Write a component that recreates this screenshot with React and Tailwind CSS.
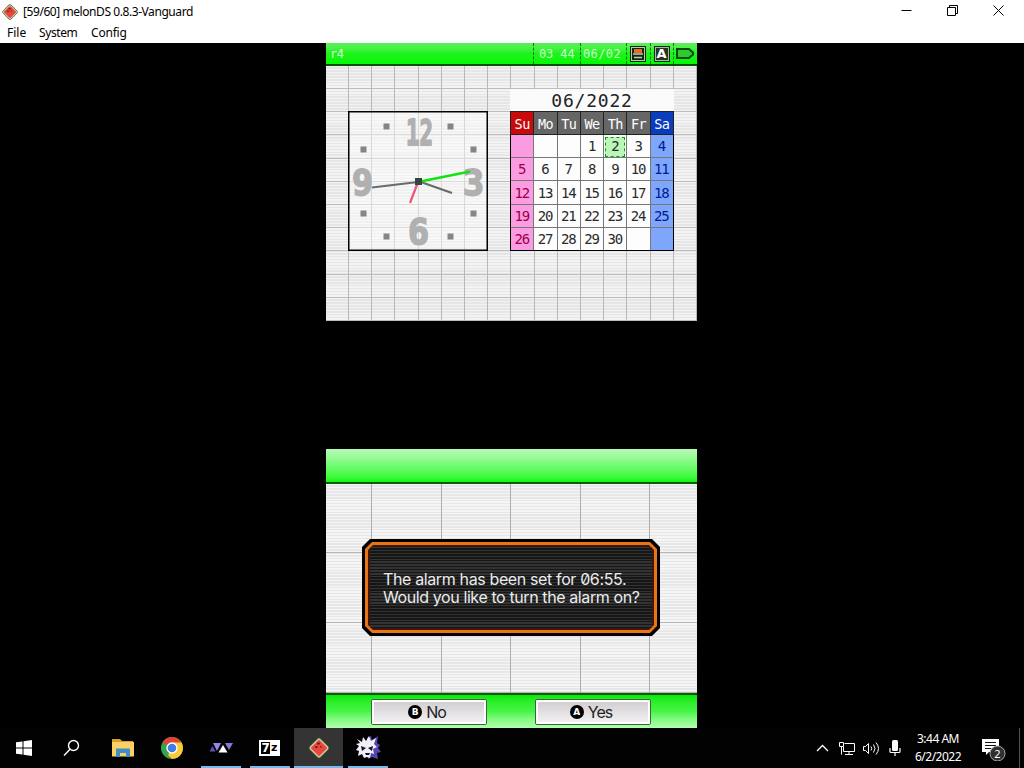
import React from "react";

const DAYS = ["Su", "Mo", "Tu", "We", "Th", "Fr", "Sa"];
const FIRST_WEEKDAY = 3;
const TODAY = 2;

const CELLS = Array.from({ length: 35 }, (_, i) => {
  const day = i - FIRST_WEEKDAY + 1;
  return day >= 1 && day <= 30 ? day : null;
});

function MelonIcon({ size }) {
  return (
    <svg width={size} height={size} viewBox="0 0 24 24">
      <rect x="4" y="4" width="16" height="16" rx="2.5" transform="rotate(45 12 12)" fill="#3f6b43" />
      <rect x="4.8" y="4.8" width="14.4" height="14.4" rx="2" transform="rotate(45 12 12)" fill="#e3cfa0" />
      <rect x="6" y="6" width="12" height="12" rx="1" transform="rotate(45 12 12)" fill="#e5483f" />
      <path d="M10 6.500h3v2h-3zM8 10h2.500v2H8zM13 10h1.500v1.500H13z" fill="#7d2020" />
    </svg>
  );
}

function TitleBar() {
  return (
    <div className="flex h-[24px] items-center bg-white text-black">
      <div className="ml-[1px] flex w-[22px]">
        <MelonIcon size={18} />
      </div>
      <span className="text-[12px] tracking-[-0.43px]">[59/60] melonDS 0.8.3-Vanguard</span>
      <div className="mr-[20px] ml-auto flex items-center gap-[35px] pb-[3px]">
        <svg width="11" height="11" viewBox="0 0 11 11" stroke="#000" fill="none">
          <path d="M0.500 5.500h10" />
        </svg>
        <svg width="11" height="11" viewBox="0 0 11 11" stroke="#000" fill="none">
          <path d="M0.500 2.500h8v8h-8zM2.500 2.500v-2h8v8h-2" />
        </svg>
        <svg width="11" height="11" viewBox="0 0 11 11" stroke="#000" fill="none">
          <path d="M0.500 0.500l10 10M10.500 0.500l-10 10" />
        </svg>
      </div>
    </div>
  );
}

function MenuBar() {
  return (
    <div className="flex h-[19px] items-center bg-white pb-[2px] pl-[7px] text-[12px] leading-[17px] text-black">
      <span className="w-[32px]">File</span>
      <span className="w-[52px] tracking-[-0.4px]">System</span>
      <span className="tracking-[-0.2px]">Config</span>
    </div>
  );
}

function StatusBar() {
  return (
    <div className="flex h-[23px] border-b-2 border-[#064d06] bg-linear-to-b from-[#5cf05c] via-[#1df21d] to-[#00fa00] font-['DejaVu_Sans_Mono',monospace] text-[12px] leading-[22px] text-[#c8ffc8]">
      <span className="w-[207px] pl-[4px] tracking-[-0.5px]">r4</span>
      <span className="w-[47px] border-l border-dashed border-[#087808] pl-[5px] tracking-[-0.1px] whitespace-pre">03 44</span>
      <span className="w-[46px] border-l border-dashed border-[#087808] pl-[2px] tracking-[0.4px]">06/02</span>
      <span className="flex w-[24px] items-center justify-center border-l border-dashed border-[#087808] pr-[1px]">
        <svg width="16" height="16" viewBox="0 0 16 16">
          <rect width="16" height="16" fill="#0b2b0b" />
          <rect x="1.500" y="1.500" width="13" height="13" fill="none" stroke="#b9c8b4" />
          <rect x="4" y="3" width="8" height="4" fill="#f0672b" />
          <path d="M3 8h10M4 11.500h8" stroke="#c9c9b9" strokeWidth="1.500" />
        </svg>
      </span>
      <span className="flex w-[23px] items-center justify-center border-l border-dashed border-[#087808] pr-[1px]">
        <span className="flex h-[16px] w-[16px] items-center justify-center border-2 border-[#102c10] bg-[#263426] font-['DejaVu_Sans',sans-serif] text-[13px] leading-none font-bold text-white outline-1 -outline-offset-2 outline-[#a6b8a6]">
          A
        </span>
      </span>
      <span className="flex flex-1 items-center justify-center border-l border-dashed border-[#087808] pr-[2px]">
        <svg width="18" height="11" viewBox="0 0 18 11">
          <path d="M1 1h12l4 3.500v2L13 10H1z" fill="#2ecb2e" stroke="#0b4a0b" strokeWidth="2" />
        </svg>
      </span>
    </div>
  );
}

const HOUR_DOTS = [
  [38.5, 15.5], [102.5, 15.5], [15.5, 38.5], [125.5, 38.5],
  [15.5, 102.5], [125.5, 102.5], [38.5, 125.5], [102.5, 125.5],
];

function Clock() {
  return (
    <div className="mt-[45px] h-[140px] w-[140px] bg-white/45">
      <svg width="140" height="140" viewBox="0 0 140 140">
        <g
          fill="#b0b0b0"
          stroke="#b0b0b0"
          strokeWidth="1.8"
          fontFamily="DejaVu Sans Mono"
          fontWeight="bold"
          fontSize="36"
        >
          <text x="58" y="33.500" textLength="27" lengthAdjust="spacingAndGlyphs">12</text>
          <text x="60" y="133" textLength="21" lengthAdjust="spacingAndGlyphs">6</text>
          <text x="4" y="84" textLength="21" lengthAdjust="spacingAndGlyphs">9</text>
          <text x="115" y="84" textLength="21" lengthAdjust="spacingAndGlyphs">3</text>
        </g>
        {HOUR_DOTS.map(([x, y]) => (
          <rect key={`${x}-${y}`} x={x - 3} y={y - 3} width="6" height="6" fill="#858585" />
        ))}
        <path d="M70 71L24 76.500" stroke="#6a6a6a" strokeWidth="2.200" />
        <path d="M70 70L104 82" stroke="#6a6a6a" strokeWidth="2.200" />
        <path d="M70 71L62 92" stroke="#ee5577" strokeWidth="2.200" />
        <path d="M70 71L122 60.500" stroke="#12e312" strokeWidth="2.800" />
        <rect x="67" y="67" width="7" height="7" fill="#34443f" />
        <rect x="0.750" y="0.750" width="138.500" height="138.500" fill="none" stroke="#000" strokeWidth="1.500" />
      </svg>
    </div>
  );
}

function headerColor(col) {
  if (col === 0) return "bg-[#c80a0a]";
  if (col === 6) return "bg-[#0a3cbe]";
  return "bg-[#666666]";
}

function cellColor(col) {
  if (col === 0) return "bg-[#fb9be2] text-[#9c0048]";
  if (col === 6) return "bg-[#7ea6fb] text-[#001a9a]";
  return "bg-[#fdfdfd] text-[#2b2b2b]";
}

function Calendar() {
  return (
    <div className="mt-[23px] w-[164px] font-['DejaVu_Sans_Mono',monospace]">
      <div className="h-[22px] bg-[#fbfbfb] text-center text-[18px] leading-[23px] tracking-[0.8px] text-[#222]">06/2022</div>
      <div className="grid h-[140px] grid-cols-7 grid-rows-6 gap-px border-[1.5px] border-black bg-[#777]">
        {DAYS.map((d, col) => (
          <div
            key={d}
            className={`flex items-center justify-center pt-[2px] text-[13.5px] tracking-[-0.6px] text-white outline-1 outline-[#222] ${headerColor(col)}`}
          >
            {d}
          </div>
        ))}
        {CELLS.map((day, i) => (
          <div
            key={i}
            className={`flex items-center justify-center pt-px pr-px text-[14px] tracking-[-1.2px] ${cellColor(i % 7)}`}
          >
            {day === TODAY ? (
              <span className="flex h-[20px] w-[20px] items-center justify-center border border-dashed border-[#0a9a0a] bg-[#b8f7b8]">{day}</span>
            ) : (
              day
            )}
          </div>
        ))}
      </div>
    </div>
  );
}

function TopScreen() {
  return (
    <div className="flex h-[278px] flex-col">
      <StatusBar />
      <div className="flex flex-1 gap-[22px] bg-[repeating-linear-gradient(90deg,transparent_0_22px,#b8b8b8_22px_23px,transparent_23px_23.2px),repeating-linear-gradient(180deg,transparent_0_22px,#bcbcbc_22px_23px,transparent_23px_23.2px),repeating-linear-gradient(180deg,#f3f3f3_0_1.45px,#e6e6e6_1.45px_2.9px)] pl-[22px]">
        <Clock />
        <Calendar />
      </div>
    </div>
  );
}

function AlarmDialog() {
  return (
    <div className="h-[97px] w-[298px] bg-black p-[3px] [clip-path:polygon(8px_0,290px_0,298px_8px,298px_89px,290px_97px,8px_97px,0_89px,0_8px)]">
      <div className="h-full bg-[#e87416] p-[3px] [clip-path:polygon(7px_0,285px_0,292px_7px,292px_84px,285px_91px,7px_91px,0_84px,0_7px)]">
        <div className="h-full bg-[#3d1708] p-[2px] [clip-path:polygon(5px_0,281px_0,286px_5px,286px_80px,281px_85px,5px_85px,0_80px,0_5px)]">
          <div className="h-full bg-[repeating-linear-gradient(180deg,#333_0_1.45px,#161616_1.45px_2.9px)] pt-[23px] pl-[13px] font-['Inter',sans-serif] text-[16px] leading-[18px] whitespace-nowrap text-[#ececec] [font-feature-settings:'zero']">
            <p className="tracking-[-0.37px]">The alarm has been set for 06:55.</p>
            <p className="tracking-[-0.4px]">Would you like to turn the alarm on?</p>
          </div>
        </div>
      </div>
    </div>
  );
}

function SoftButton({ glyph, label }) {
  return (
    <div className="flex h-[26px] w-[116px] items-center justify-center gap-[4px] rounded-[2px] border-[1.5px] border-[#3c643c] bg-linear-to-b from-[#cfcacf] to-[#f5f5f5] pr-[4px] text-[#222] outline-2 -outline-offset-3 outline-white">
      <span className="flex h-[14px] w-[14px] items-center justify-center rounded-full bg-black font-['DejaVu_Sans',sans-serif] text-[9px] leading-none font-bold text-white">
        {glyph}
      </span>
      <span className="font-['Inter',sans-serif] text-[16px] leading-none tracking-[-1px]">{label}</span>
    </div>
  );
}

function BottomScreen() {
  return (
    <div className="flex h-[279px] flex-col">
      <div className="h-[35px] border-b-2 border-[#0a5a0a] bg-linear-to-b from-[#b8f8b8] via-[#70fb70] to-[#00f800]" />
      <div className="flex-1 bg-[repeating-linear-gradient(90deg,transparent_0_45px,#adadad_45px_46px,transparent_46px_69.6px),repeating-linear-gradient(180deg,transparent_0_68.3px,#b5b5b5_68.3px_69.3px,transparent_69.3px_69.6px),repeating-linear-gradient(180deg,#f5f5f5_0_1.45px,#e7e7e7_1.45px_2.9px)] pt-[55px] pl-[36px]">
        <AlarmDialog />
      </div>
      <div className="flex h-[35px] items-start gap-[48px] border-t-2 border-[#0a5a0a] bg-linear-to-b from-[#00ea00] via-[#45f545] to-[#b0ffb0] pt-[4px] pl-[45px]">
        <SoftButton glyph="B" label="No" />
        <SoftButton glyph="A" label="Yes" />
      </div>
    </div>
  );
}

function TaskSlot({ children, running, active }) {
  return (
    <div
      className={`flex h-full w-[49px] flex-col items-center ${active ? "bg-[#343434]" : ""}`}
    >
      <div className="flex flex-1 items-center justify-center pt-[1px]">{children}</div>
      <div className={`h-[2px] ${active ? "w-[49px]" : "w-[40px]"} ${running ? "bg-[#76b9ed]" : ""}`} />
    </div>
  );
}

function Taskbar() {
  return (
    <div className="flex h-[40px] items-center bg-[#020202] text-white">
      <TaskSlot>
        <svg className="mr-[2px]" width="16" height="16" viewBox="0 0 16 16" fill="#fff">
          <path d="M0 2.300L6.500 1.400V7.500H0zM7.500 1.200L16 0v7.500H7.500zM0 8.500h6.500v6.100L0 13.700zM7.500 8.500H16V16l-8.500-1.200z" />
        </svg>
      </TaskSlot>
      <TaskSlot>
        <svg className="mr-[3px]" width="18" height="18" viewBox="0 0 18 18" fill="none" stroke="#fff" strokeWidth="1.400">
          <circle cx="10.500" cy="6.500" r="5" />
          <path d="M7 10.200L1 16.500" />
        </svg>
      </TaskSlot>
      <TaskSlot>
        <svg width="22" height="18" viewBox="0 0 22 18">
          <path d="M0 0h8l2 2h11v4H0z" fill="#d9a030" />
          <path d="M0 3h22v14.500H0z" fill="#fbd166" />
          <path d="M4 9.500h14V18h-4v-4H8v4H4z" fill="#3c8fc8" />
        </svg>
      </TaskSlot>
      <TaskSlot>
        <svg width="22" height="22" viewBox="0 0 22 22">
          <circle cx="11" cy="11" r="11" fill="#36a350" />
          <path d="M11 11L1.500 5.500A11 11 0 0 1 20.500 5.500z" fill="#e04436" />
          <path d="M11 11L20.500 5.500A11 11 0 0 1 11 22L7 18z" fill="#fccb35" />
          <path d="M11 5.500h9.500L16 14l-5 8 4-8z" fill="#fccb35" />
          <circle cx="11" cy="11" r="5.700" fill="#fff" />
          <circle cx="11" cy="11" r="4.300" fill="#3c7de8" />
        </svg>
      </TaskSlot>
      <TaskSlot running>
        <svg width="24" height="11" viewBox="0 0 24 11">
          <path d="M3.500 4L6.500 9.500H0.500z" fill="#5c52b5" />
          <path d="M4 1h8L8 9z" fill="#9187e6" />
          <path d="M9.500 10.500h9L14 3z" fill="#fff" />
          <path d="M16 1h8l-4 7z" fill="#8279dc" />
        </svg>
      </TaskSlot>
      <TaskSlot running>
        <span className="flex h-[16px] w-[21px] items-center justify-center bg-white p-[2px]">
          <span className="flex h-[12px] w-[10px] items-center justify-center bg-black font-['DejaVu_Sans',sans-serif] text-[12px] leading-none font-bold text-white">7</span>
          <span className="w-[8px] text-center font-['DejaVu_Sans',sans-serif] text-[11px] leading-none font-bold text-black">z</span>
        </span>
      </TaskSlot>
      <TaskSlot running active>
        <MelonIcon size={24} />
      </TaskSlot>
      <TaskSlot running>
        <svg width="26" height="26" viewBox="0 0 26 26">
          <path d="M12 3l4-2 1 4 6-4-1 7 3 2-2 3 3 4-4 1 1 6-6-2-4 2z" fill="#5746ae" />
          <path d="M2 4l5 3 1-5 3 4 3-5 2 5 5-3-2 6 3 3-4 2 1 5-3-1-1 5-3-1-3 1-2-4-4 2 1-5-3-1 3-4-3-2 4-1z" fill="#f3eef8" />
          <path d="M6 11l5 2-4 3zM18 11l-5 2 4 3zM10 18h5l-1 2h-3z" fill="#17112d" />
        </svg>
      </TaskSlot>

      <div className="ml-auto flex h-full items-center">
        <svg className="mr-[10px]" width="13" height="8" viewBox="0 0 13 8" fill="none" stroke="#fff" strokeWidth="1.300">
          <path d="M1 7l5.500-5.500L12 7" />
        </svg>
        <svg className="mr-[7px]" width="17" height="15" viewBox="0 0 17 15" fill="none" stroke="#fff">
          <path d="M5.500 2.500h10v8H4.500V6M6 13.500h8M10 10.500v3M0.500 1.500h4v4h-4zM2.500 5.500v8" />
        </svg>
        <svg className="mr-[9px]" width="17" height="15" viewBox="0 0 17 15" fill="none" stroke="#fff">
          <path d="M0.500 5.500h2l3-3v10l-3-3h-2zM8 5.500q1.500 2 0 4M10.500 3.500q3 4 0 8M13 1.500q5 6 0 12" />
        </svg>
        <svg className="mr-[9px]" width="12" height="16" viewBox="0 0 12 16">
          <rect x="3" y="0" width="6" height="11" rx="1.500" fill="#fff" />
          <path d="M1 8v3.500q0 1 1 1h8q1 0 1-1V8M6 12.500V16" fill="none" stroke="#fff" strokeWidth="1.200" />
        </svg>
        <div className="w-[56px] text-center text-[12px] leading-[18px] tracking-[-0.5px] whitespace-nowrap">
          <div>3:44 AM</div>
          <div>6/2/2022</div>
        </div>
        <svg className="mr-[12px] ml-[15px]" width="26" height="26" viewBox="0 0 26 26">
          <path d="M1 4h17v13H8l-3 3v-3H1z" fill="#fff" />
          <path d="M4 7.500h11M4 10.500h11M4 13.500h6" stroke="#111" />
          <circle cx="16.500" cy="18.500" r="7.500" fill="#303030" stroke="#aaa" />
          <text x="16.500" y="22.500" textAnchor="middle" fontFamily="Noto Sans" fontSize="11" fill="#fff">2</text>
        </svg>
        <div className="mr-[4px] h-full w-px bg-[#555]" />
      </div>
    </div>
  );
}

export default function App() {
  return (
    <div className="flex h-[768px] w-[1024px] flex-col overflow-hidden bg-black font-['Noto_Sans',sans-serif]">
      <TitleBar />
      <MenuBar />
      <div className="flex flex-1 justify-center pr-[1px]">
        <div className="flex w-[371px] flex-col justify-between">
          <TopScreen />
          <BottomScreen />
        </div>
      </div>
      <Taskbar />
    </div>
  );
}
